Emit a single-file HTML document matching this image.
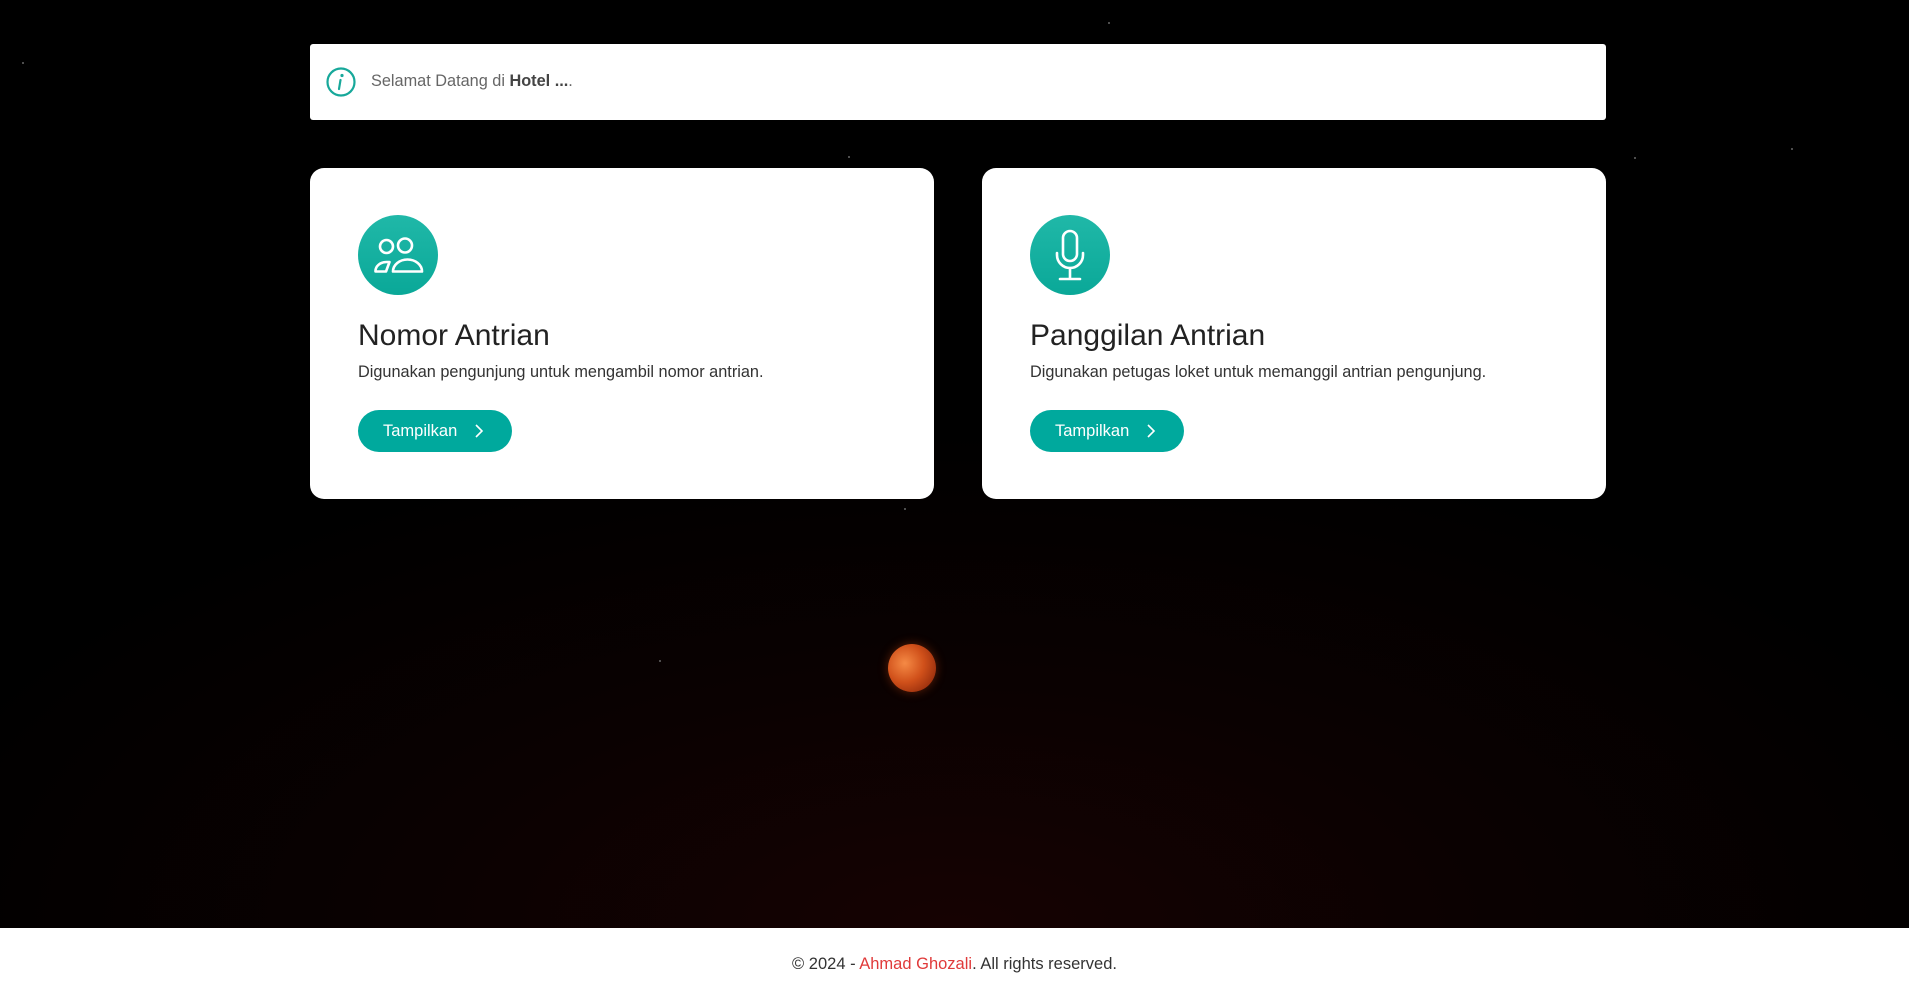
<!DOCTYPE html>
<html><head><meta charset="utf-8"><style>
*{box-sizing:border-box;margin:0;padding:0}
body{width:1909px;height:1000px;overflow:hidden;font-family:"Liberation Sans",sans-serif;background:#000;position:relative}
.bg{position:absolute;left:0;top:0;width:1909px;height:928px;background:radial-gradient(ellipse 1100px 500px at 50% 100%,#160202 0%,#0a0101 50%,#000 100%)}
.star{position:absolute;width:2px;height:2px;background:#666;border-radius:50%}
.moon{position:absolute;left:888px;top:644px;width:48px;height:48px;border-radius:50%;background:radial-gradient(circle at 35% 40%,#f58a45 0%,#d0501a 45%,#7a1c06 100%);box-shadow:0 0 10px rgba(220,80,20,.4)}
.alert{position:absolute;left:310px;top:44px;width:1296px;height:76px;background:#fff;border-radius:3px}
.card{position:absolute;top:168px;width:624px;height:331px;background:#fff;border-radius:14px}
.ic{position:absolute;left:48px;top:47px;width:80px;height:80px;border-radius:50%;background:linear-gradient(#20b8a8,#0aa898)}
.card h2{position:absolute;left:48px;top:151px;font-weight:normal;font-size:30px;color:#222}
.card p{position:absolute;left:48px;top:195px;font-size:16.3px;color:#333}
.btn{position:absolute;left:48px;top:242px;width:154px;height:42px;border-radius:21px;background:#00a99d;color:#fff;font-size:16.5px;line-height:42px;padding-left:25px}
.btn svg{position:absolute;left:116px;top:14px}
.foot{position:absolute;left:0;top:928px;width:1909px;height:72px;background:#fff;text-align:center;line-height:72px;font-size:16.5px;color:#333}
.foot span{color:#e03a3a}
</style></head><body>
<div class="bg"></div>
<div class="star" style="left:22px;top:62px"></div><div class="star" style="left:848px;top:156px"></div>
<div class="star" style="left:1791px;top:148px"></div><div class="star" style="left:1634px;top:157px"></div>
<div class="star" style="left:1108px;top:22px"></div><div class="star" style="left:659px;top:660px"></div>
<div class="star" style="left:904px;top:508px"></div>
<div class="moon"></div>
<div class="alert">
<svg style="position:absolute;left:15px;top:22px" width="32" height="32" viewBox="0 0 32 32"><circle cx="16" cy="16" r="13.5" fill="none" stroke="#17a89a" stroke-width="2.2"/><circle cx="17" cy="9.5" r="1.6" fill="#17a89a"/><path d="M15.5 14 L14 23" stroke="#17a89a" stroke-width="2.2" stroke-linecap="round"/></svg>
<div style="position:absolute;left:61px;top:28px;font-size:16.3px;color:#666">Selamat Datang di <b style="color:#444">Hotel ...</b>.</div>
</div>
<div class="card" style="left:310px">
<div class="ic"><svg width="80" height="80" viewBox="0 0 80 80" fill="none" stroke="#fff" stroke-width="2.6" stroke-linejoin="round"><circle cx="28.5" cy="31.5" r="6.5"/><circle cx="47" cy="30.5" r="7"/><path d="M17.5 56.5 a11 9 0 0 1 11-9.5 h3 l-3.5 9.5 z"/><path d="M35 56.5 a14.5 12 0 0 1 29 0 z"/></svg></div>
<h2>Nomor Antrian</h2>
<p>Digunakan pengunjung untuk mengambil nomor antrian.</p>
<div class="btn">Tampilkan<svg width="10" height="14" viewBox="0 0 10 14"><path d="M2 1 L8 7 L2 13" fill="none" stroke="#fff" stroke-width="1.6"/></svg></div>
</div>
<div class="card" style="left:982px">
<div class="ic"><svg width="80" height="80" viewBox="0 0 80 80" fill="none" stroke="#fff" stroke-width="2.6" stroke-linecap="round"><rect x="33" y="16" width="14" height="30" rx="7"/><path d="M27 38 v2 a13 13 0 0 0 26 0 v-2"/><path d="M40 53 v10 M30 64 h20"/></svg></div>
<h2>Panggilan Antrian</h2>
<p>Digunakan petugas loket untuk memanggil antrian pengunjung.</p>
<div class="btn">Tampilkan<svg width="10" height="14" viewBox="0 0 10 14"><path d="M2 1 L8 7 L2 13" fill="none" stroke="#fff" stroke-width="1.6"/></svg></div>
</div>
<div class="foot">© 2024 - <span>Ahmad Ghozali</span>. All rights reserved.</div>
</body></html>
